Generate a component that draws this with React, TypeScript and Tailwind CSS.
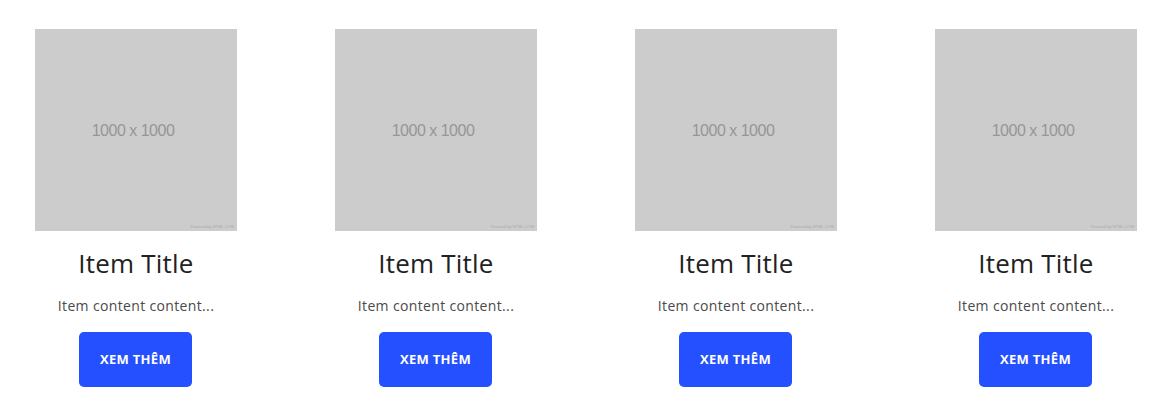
const items = [1, 2, 3, 4];

function Card() {
  return (
    <div className="flex w-[202px] flex-col items-center">
      <div className="relative flex h-[202px] w-[202px] items-center justify-center bg-[#cccccc] pr-[6px] pt-[2px]">
        <span className="text-[16px] tracking-[-0.5px] text-[#969696] [font-family:'Liberation_Sans',Arial,sans-serif]">
          1000 x 1000
        </span>
        <span className="absolute bottom-[2px] right-[3px] text-[4px] leading-none text-[#aaaaaa] [font-family:'Liberation_Sans',sans-serif]">
          Powered by HTML.COM
        </span>
      </div>
      <h3 className="mt-[15px] text-[26px] leading-[34px] font-normal tracking-[0.2px] text-[#222222] [font-family:'Open_Sans',sans-serif]">
        Item Title
      </h3>
      <p className="mt-[16px] text-[14px] leading-[20px] tracking-[0.35px] text-[#4a4a4a] [font-family:'Open_Sans',sans-serif]">
        Item content content...
      </p>
      <button className="-ml-[1px] mt-[16px] flex h-[55px] w-[113px] items-center justify-center rounded-[5px] bg-[#2450ff] text-[13px] font-bold tracking-[0.3px] text-white [font-family:'Open_Sans',sans-serif]">
        XEM THÊM
      </button>
    </div>
  );
}

export default function App() {
  return (
    <div className="min-h-[419px] w-[1170px] bg-white pl-[35px] pt-[29px]">
      <div className="flex gap-[98px]">
        {items.map((i) => (
          <Card key={i} />
        ))}
      </div>
    </div>
  );
}
